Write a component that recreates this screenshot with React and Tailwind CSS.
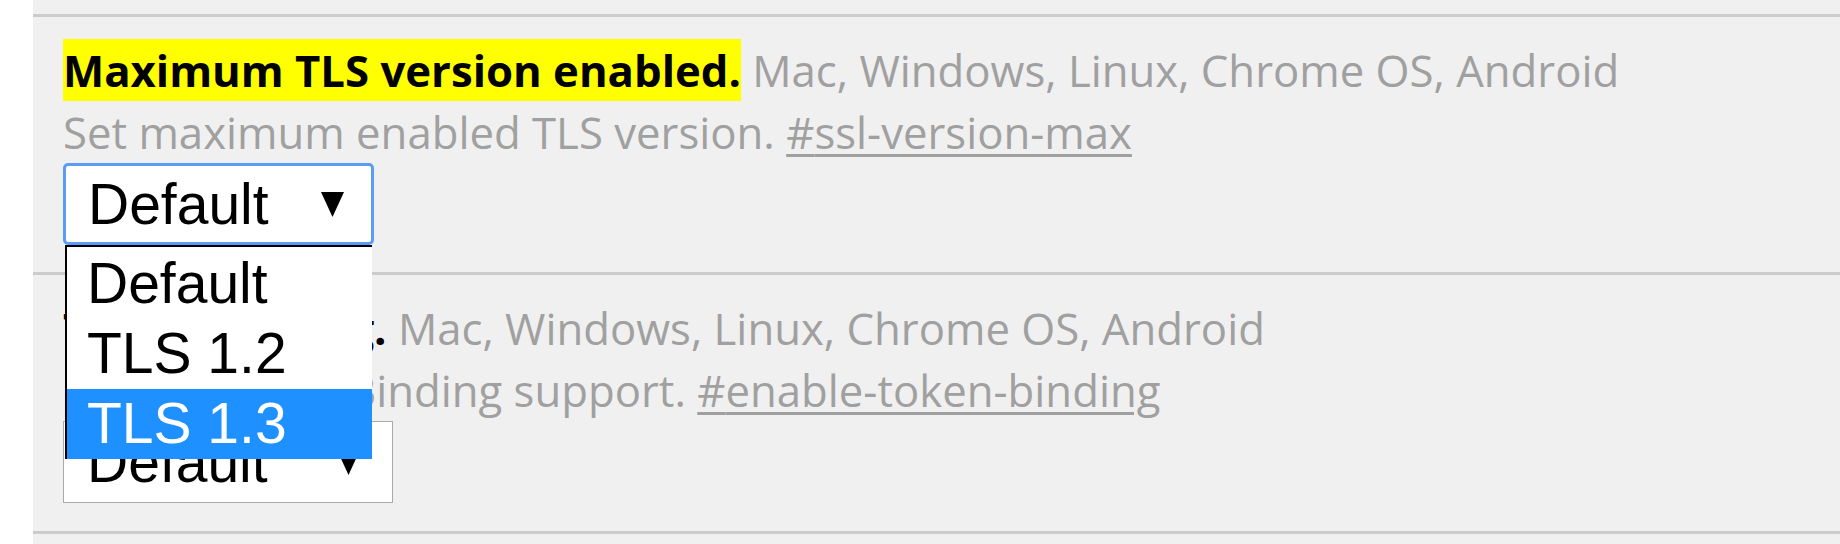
const platforms = 'Mac, Windows, Linux, Chrome OS, Android'

function Arrow() {
  return (
    <svg
      width="23"
      height="25"
      viewBox="0 0 23 25"
      className="ml-auto shrink-0"
    >
      <polygon points="0,0 23,0 11.5,25" fill="#000" />
    </svg>
  )
}

function FakeSelect({ focused, width, children }) {
  return (
    <div className="relative" style={{ width }}>
      <div
        className={
          focused
            ? 'flex h-[82px] items-center rounded-[5px] border-[3px] border-[#5b9cf8] bg-white pl-[22px] pr-[27px] text-black'
            : 'flex h-[82px] items-center border border-[#a9a9a9] bg-white pl-[23px] pr-[32px] text-black'
        }
      >
        <span className="leading-[66px]">Default</span>
        <Arrow />
      </div>
      {children}
    </div>
  )
}

function Options() {
  const options = ['Default', 'TLS 1.2', 'TLS 1.3']

  return (
    <div className="absolute left-[2px] top-full z-10 w-[307px] border-l-2 border-t-2 border-black bg-white pt-[2px]">
      {options.map((option) => (
        <div
          key={option}
          className={
            option === 'TLS 1.3'
              ? 'h-[70px] bg-[#1e90ff] pl-[20px] leading-[68px] text-white'
              : 'h-[70px] pl-[20px] leading-[68px] text-black'
          }
        >
          {option}
        </div>
      ))}
    </div>
  )
}

function Experiment({ title, highlight, description, link, last, children }) {
  return (
    <section
      className={
        last
          ? 'border-y-[3px] border-[#cccccc] pb-[28px] pl-[30px] pt-[22px]'
          : 'border-t-[3px] border-[#cccccc] pb-[27px] pl-[30px] pt-[22px]'
      }
    >
      <div className="whitespace-nowrap font-['Open_Sans',sans-serif] text-[43.7px] leading-[62px] text-[#a0a0a0]">
        <span
          className={
            highlight
              ? 'inline-block bg-[#ffff00] font-bold text-black'
              : 'inline-block font-bold text-black'
          }
        >
          {title}
        </span>{' '}
        {platforms}
      </div>
      <div className="whitespace-nowrap font-['Open_Sans',sans-serif] text-[43.7px] leading-[62px] text-[#a0a0a0]">
        {description}{' '}
        <a
          href={`#${link}`}
          className="underline decoration-[3px] underline-offset-[5px]"
        >
          #{link}
        </a>
      </div>
      <div className="font-['Liberation_Sans',Arial,sans-serif] text-[57px]">
        {children}
      </div>
    </section>
  )
}

export default function App() {
  return (
    <div className="h-[544px] w-[1840px] overflow-hidden bg-white pl-[33px]">
      <div className="h-full bg-[#f0f0f0] pt-[14px]">
        <Experiment
          title="Maximum TLS version enabled."
          highlight
          description="Set maximum enabled TLS version."
          link="ssl-version-max"
        >
          <FakeSelect focused width={311}>
            <Options />
          </FakeSelect>
        </Experiment>

        <Experiment
          title="Token Binding."
          description="Enable Token Binding support."
          link="enable-token-binding"
          last
        >
          <FakeSelect width={330} />
        </Experiment>
      </div>
    </div>
  )
}
